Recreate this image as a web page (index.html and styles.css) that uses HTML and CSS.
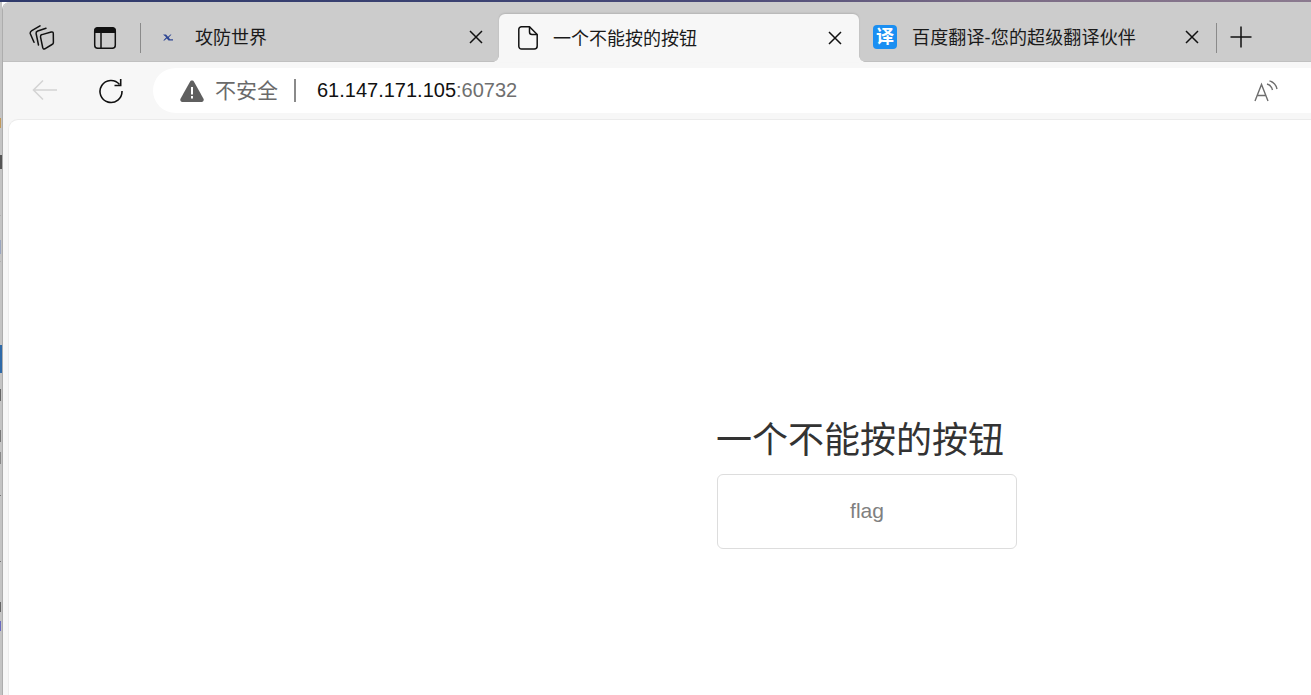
FILE: index.html
```html
<!DOCTYPE html>
<html lang="zh">
<head>
<meta charset="utf-8">
<title>一个不能按的按钮</title>
<link rel="stylesheet" href="styles.css">
</head>
<body>
<div class="wallpaper"></div>
<div class="desk">
  <div class="behind">
    <i class="mark m1"></i><i class="mark m2"></i><i class="mark m3"></i><i class="mark m4"></i><i class="mark m5"></i><i class="mark m6"></i><i class="mark m7"></i><i class="mark m8"></i><i class="mark m9"></i><i class="mark m10"></i><i class="mark m11"></i><i class="mark m12"></i><i class="mark m13"></i>
  </div>
  <div class="window">
    <div class="tabstrip">
      <button class="strip-btn first">
        <svg width="26" height="26" viewBox="0 0 26 26" fill="none" stroke="#111" stroke-width="1.5" stroke-linejoin="round" stroke-linecap="round"><path d="M13 9.600 L22.200 7 Q24.200 6.600 24.300 8.500 L24.400 17.500 Q24.400 19 23 19.500 L15.800 23.800 Q14 24.400 13.700 22.500 L11.500 11.800 Q11.300 10 13 9.600 Z"/><path d="M17 3.300 L8.700 6 Q6.800 6.700 7.100 8.500 L9.500 20"/><path d="M11 0.900 L2.800 5.700 Q0.800 7 1.300 8.800 L5 17.300"/></svg>
      </button>
      <button class="strip-btn second">
        <svg width="24" height="24" viewBox="0 0 24 24" fill="none"><path d="M4.500 1.500 H19.500 A3 3 0 0 1 22.500 4.500 V7 H1.500 V4.500 A3 3 0 0 1 4.500 1.500 Z" fill="#111"/><rect x="1.700" y="1.700" width="20.600" height="20.600" rx="3" stroke="#111" stroke-width="1.500"/><path d="M8 7 V22" stroke="#111" stroke-width="1.500"/></svg>
      </button>
      <span class="divider"></span>
      <div class="tab t1">
        <svg class="fav-small" width="10" height="7" viewBox="0 0 10 7"><path d="M0 0.500 H3 L5 2.800 L7.500 0.500 H8.500 L5.800 3.600 L7 5.200 H10 V6.500 H5.500 L3.800 4.400 L1.500 6.500 H0.200 L3.200 3.200 Z" fill="#2e4694"/></svg>
        <span class="tab-title">攻防世界</span>
        <svg class="close" width="14" height="14" viewBox="0 0 14 14" stroke="#111" stroke-width="1.500"><path d="M1 1 L13 13 M13 1 L1 13"/></svg>
      </div>
      <div class="tab active">
        <svg class="page" width="20" height="24" viewBox="0 0 20 24" fill="none" stroke="#111" stroke-width="1.500" stroke-linejoin="round"><path d="M3.500 0.800 H11.500 L19.200 8.500 V20 A3 3 0 0 1 16.200 23 H3.500 A2.700 2.700 0 0 1 0.800 20.300 V3.500 A2.700 2.700 0 0 1 3.500 0.800 Z"/><path d="M11.500 0.800 V6 A2.500 2.500 0 0 0 14 8.500 H19.200"/></svg>
        <span class="tab-title">一个不能按的按钮</span>
        <svg class="close" width="14" height="14" viewBox="0 0 14 14" stroke="#111" stroke-width="1.500"><path d="M1 1 L13 13 M13 1 L1 13"/></svg>
      </div>
      <div class="tab t3">
        <span class="fav-blue">译</span>
        <span class="tab-title">百度翻译-您的超级翻译伙伴</span>
        <svg class="close" width="14" height="14" viewBox="0 0 14 14" stroke="#111" stroke-width="1.500"><path d="M1 1 L13 13 M13 1 L1 13"/></svg>
      </div>
      <span class="divider d2"></span>
      <button class="strip-btn plus">
        <svg width="22" height="22" viewBox="0 0 22 22" stroke="#111" stroke-width="1.500"><path d="M11 0.500 V21.500 M0.500 11 H21.500"/></svg>
      </button>
    </div>
    <div class="toolbar">
      <button class="tool back">
        <svg width="26" height="22" viewBox="0 0 26 22" fill="none" stroke="#d4d4d4" stroke-width="1.600"><path d="M25 11 H1.500 M11 1.500 L1.500 11 L11 20.500"/></svg>
      </button>
      <button class="tool reload">
        <svg width="26" height="26" viewBox="0 0 26 26" fill="none" stroke="#111" stroke-width="1.600"><path d="M21.500 6.500 A11 11 0 1 0 24 13"/><path d="M22.700 1 V7.500 H16.500"/></svg>
      </button>
      <div class="omnibox">
        <svg class="warn" width="24" height="22" viewBox="0 0 24 22"><path d="M12 0.500 C13 0.500 13.600 1 14 1.700 L23.500 18.800 C24.200 20.200 23.300 22 21.700 22 H2.300 C0.700 22 -0.200 20.200 0.500 18.800 L10 1.700 C10.400 1 11 0.500 12 0.500 Z" fill="#5f5f5f"/><rect x="11" y="7" width="2" height="7.500" fill="#fff"/><rect x="11" y="16" width="2" height="2.500" fill="#fff"/></svg>
        <span class="insecure">不安全</span>
        <span class="bar"></span>
        <span class="url">61.147.171.105<span class="port">:60732</span></span>
        <svg class="read" width="24" height="22" viewBox="0 0 24 22" fill="none" stroke="#6e6e6e" stroke-width="1.400"><path d="M1 21 L7.500 4.500 L14 21 M3.500 15.500 H11.500"/><path d="M13 4 A8 8 0 0 1 18.500 10"/><path d="M15.500 0.800 A11 11 0 0 1 23 9"/></svg>
      </div>
    </div>
    <main class="content">
      <div class="panel">
        <h1 class="title">一个不能按的按钮</h1>
        <button class="flag">flag</button>
      </div>
    </main>
  </div>
</div>
</body>
</html>
```
FILE: styles.css
```css
* { box-sizing: border-box; }
html, body { margin: 0; height: 100%; overflow: hidden; }
body {
  width: 1311px;
  height: 695px;
  display: flex;
  flex-direction: column;
  background: #fff;
  font-family: "Liberation Sans", "Noto Sans CJK SC", sans-serif;
}
button { border: 0; padding: 0; background: none; font: inherit; }
svg { display: block; flex: none; }

.wallpaper {
  height: 2px;
  flex: none;
  background: linear-gradient(90deg, #2f3a6b 0%, #3b4272 35%, #4a4a78 55%, #7a6b85 75%, #8b7a8f 100%);
}
.desk { flex: 1; display: flex; min-height: 0; }

.behind {
  position: relative;
  width: 2px;
  flex: none;
  background: #c4c4c4;
}
.mark { position: absolute; left: 0; width: 1px; background: #b0b0b0; height: 1px; }
.m1 { top: 116px; height: 10px; background: #c29a5c; }
.m2 { top: 153px; height: 14px; background: #555; width: 2px; }
.m3 { top: 213px; }
.m4 { top: 238px; height: 14px; background: #9aa6c0; }
.m5 { top: 259px; }
.m6 { top: 343px; height: 28px; background: #2f6aa8; width: 2px; }
.m7 { top: 387px; height: 12px; background: #666; }
.m8 { top: 428px; height: 12px; background: #777; }
.m9 { top: 450px; height: 12px; background: #888; }
.m10 { top: 493px; background: #777; }
.m11 { top: 559px; background: #777; }
.m12 { top: 600px; height: 10px; background: #666; }
.m13 { top: 619px; height: 10px; background: #6a6ac0; }

.window {
  flex: 1;
  min-width: 0;
  display: flex;
  flex-direction: column;
  border-left: 1px solid #adadad;
  border-top-left-radius: 8px;
  background: #f7f7f7;
  overflow: hidden;
}

.tabstrip {
  height: 60px;
  flex: none;
  display: flex;
  align-items: flex-end;
  background: #cccccc;
  border-bottom: 1px solid #c0c0c0;
  position: relative;
}
.strip-btn { display: flex; align-items: center; justify-content: center; align-self: center; margin-top: 12px; }
.first { width: 26px; margin-left: 26px; }
.second { width: 24px; margin-left: 38px; }
.divider {
  width: 1px;
  height: 30px;
  align-self: center;
  margin-top: 12px;
  margin-left: 23px;
  background: #8a8a8a;
  flex: none;
}
.tab {
  height: 48px;
  display: flex;
  align-items: center;
  flex: none;
  font-size: 18px;
  color: #1a1a1a;
}
.tab-title { white-space: nowrap; font-size: 18px; line-height: 24px; padding-top: 1px; }
.t1 { width: 358px; padding-left: 22px; }
.t1 .tab-title { margin-left: 22px; flex: 1; }
.t1 .close { margin-right: 16px; }
.active {
  width: 360px;
  height: 48px;
  padding-left: 19px;
  background: #f7f7f7;
  border-radius: 6px 6px 0 0;
  margin-bottom: -1px;
  box-shadow: 0 -1px 2px rgba(0, 0, 0, 0.12);
  position: relative;
}
.active::before,
.active::after {
  content: "";
  position: absolute;
  bottom: 0;
  width: 6px;
  height: 6px;
}
.active::before { left: -6px; background: radial-gradient(circle at 0 0, transparent 5.5px, #f7f7f7 6px); }
.active::after { right: -6px; background: radial-gradient(circle at 100% 0, transparent 5.5px, #f7f7f7 6px); }
.active .tab-title { margin-left: 15px; flex: 1; }
.active .close { margin-right: 17px; }
.t3 { width: 357px; padding-left: 14px; }
.t3 .tab-title { margin-left: 15px; flex: 1; letter-spacing: 0.15px; }
.t3 .close { margin-right: 17px; }
.fav-blue {
  width: 24px;
  height: 24px;
  flex: none;
  border-radius: 4px;
  background: #1b8ff2;
  color: #fff;
  font-size: 18px;
  font-weight: 700;
  line-height: 24px;
  text-align: center;
}
.d2 { margin-left: 0; }
.plus { width: 22px; margin-left: 13px; margin-top: 11px; }

.toolbar {
  height: 57px;
  flex: none;
  display: flex;
  align-items: center;
  padding: 6px 0;
  background: #f7f7f7;
}
.tool { display: flex; align-items: center; justify-content: center; flex: none; }
.back { width: 26px; margin-left: 29px; margin-bottom: 1px; }
.reload { width: 26px; margin-left: 40px; }
.omnibox {
  flex: 1;
  height: 45px;
  margin-left: 29px;
  margin-right: -20px;
  padding-right: 53px;
  display: flex;
  align-items: center;
  background: #fff;
  border-radius: 23px;
}
.warn { margin-left: 27px; }
.insecure { margin-left: 11px; padding-bottom: 4px; font-size: 21px; color: #6a6a6a; white-space: nowrap; }
.bar { width: 2px; height: 23px; margin-left: 16px; background: #8a8a8a; flex: none; }
.url { margin-left: 21px; font-size: 20px; color: #111; white-space: nowrap; flex: 1; }
.port { color: #6f6f6f; }

.content {
  flex: 1;
  min-height: 0;
  margin-left: 5px;
  background: #fff;
  border-top: 1px solid #ebebeb;
  border-left: 1px solid #ececec;
  border-top-left-radius: 10px;
  display: flex;
  padding: 297px 0 0 708px;
}
.panel { width: 300px; }
.title {
  margin: 0 0 10px -1px;
  font-size: 36px;
  font-weight: 400;
  line-height: 47px;
  color: #333;
  white-space: nowrap;
}
.flag {
  display: block;
  width: 300px;
  height: 75px;
  padding-bottom: 2px;
  border: 1px solid #ddd;
  border-radius: 6px;
  background: #fff;
  color: #808080;
  font-size: 21px;
}
```
